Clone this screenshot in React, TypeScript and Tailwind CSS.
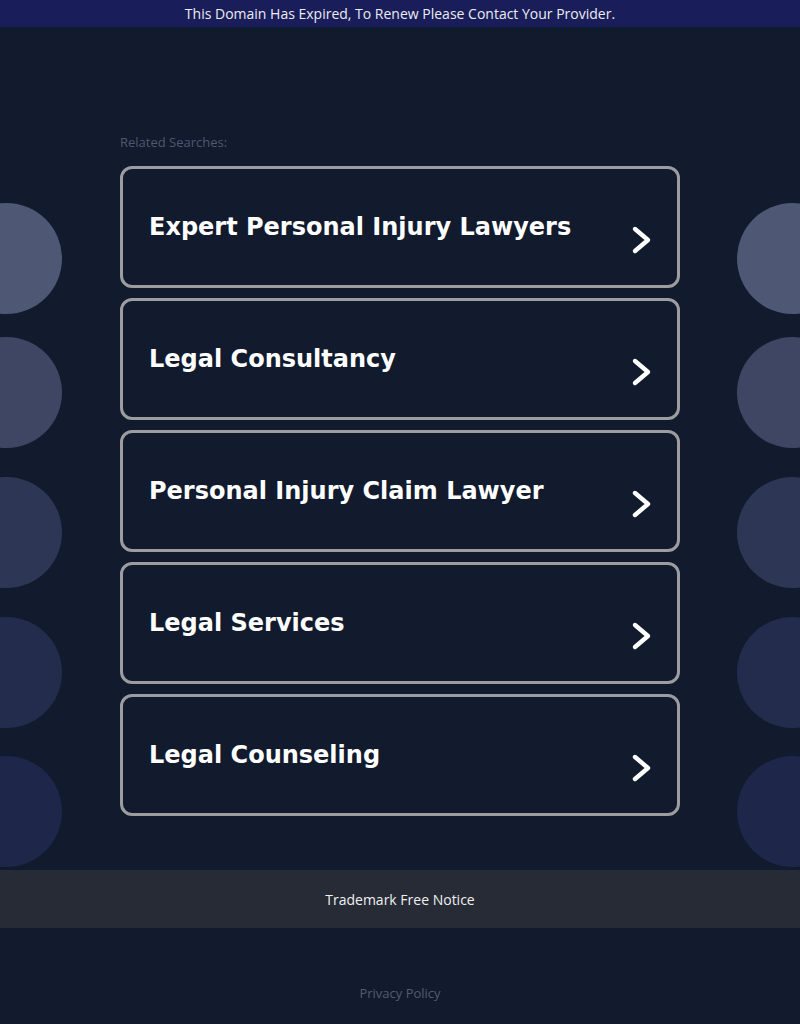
const searches = [
  'Expert Personal Injury Lawyers',
  'Legal Consultancy',
  'Personal Injury Claim Lawyer',
  'Legal Services',
  'Legal Counseling',
]

// decorative dots down both edges, top to bottom
const dots = [
  { top: 'top-[203px]', color: 'bg-[#4e5773]' },
  { top: 'top-[337px]', color: 'bg-[#3e4664]' },
  { top: 'top-[477px]', color: 'bg-[#2e3655]' },
  { top: 'top-[617px]', color: 'bg-[#242c4e]' },
  { top: 'top-[756px]', color: 'bg-[#1e264a]' },
]

function Chevron() {
  return (
    <svg
      width="22"
      height="30"
      viewBox="0 0 22 30"
      className="mt-[26px] shrink-0"
      fill="none"
      stroke="#ffffff"
      strokeWidth="4.4"
      strokeLinecap="round"
      strokeLinejoin="round"
    >
      <polyline points="4,4 17,15 4,26" />
    </svg>
  )
}

export default function App() {
  return (
    <div
      className="relative min-h-[1024px] overflow-hidden bg-[#121a2d]"
      style={{ fontFamily: '"Open Sans", "Noto Sans", sans-serif' }}
    >
      {/* side decoration */}
      {dots.map((d) => (
        <div key={d.top}>
          <div
            className={`absolute ${d.top} left-[-49px] h-[111px] w-[111px] rounded-full ${d.color}`}
          />
          <div
            className={`absolute ${d.top} right-[-48px] h-[111px] w-[111px] rounded-full ${d.color}`}
          />
        </div>
      ))}

      {/* expired banner */}
      <div className="relative flex h-[27px] items-center justify-center bg-[#191d5a] text-[14px] font-medium text-[#ececf2]">
        This Domain Has Expired, To Renew Please Contact Your Provider.
      </div>

      <div className="relative mx-auto w-[560px] pt-[105px]">
        <div className="text-[13px] leading-[20px] text-[#4f5771]">
          Related Searches:
        </div>
        <div className="mt-[14px] flex flex-col gap-[10px]">
          {searches.map((s) => (
            <div
              key={s}
              className="flex h-[122px] items-center justify-between rounded-[12px] border-[3px] border-[#9c9ca1] bg-[#121a2d] pl-[26px] pr-[24px]"
            >
              <span
                className="text-[24px] font-bold leading-none text-white"
                style={{ fontFamily: '"DejaVu Sans", sans-serif' }}
              >
                {s}
              </span>
              <Chevron />
            </div>
          ))}
        </div>
      </div>

      {/* footer */}
      <div className="relative mt-[54px] flex h-[58px] items-center justify-center bg-[#262b36] text-[14px] font-medium text-[#f0f0f0]">
        Trademark Free Notice
      </div>
      <div className="relative mt-[56px] text-center text-[13px] text-[#535b72]">
        Privacy Policy
      </div>
    </div>
  )
}
